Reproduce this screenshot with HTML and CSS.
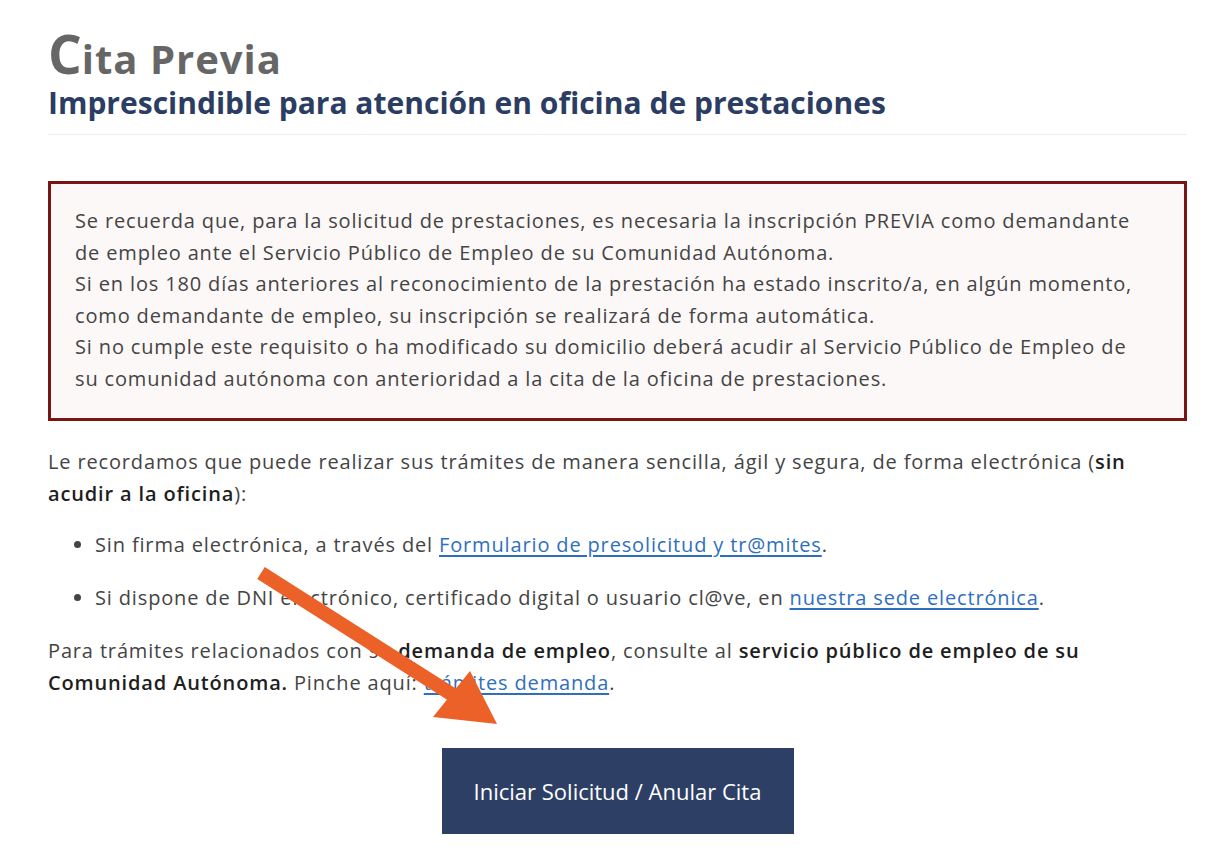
FILE: index.html
```html
<!DOCTYPE html>
<html lang="es">
<head>
<meta charset="utf-8">
<title>Cita Previa</title>
<link rel="stylesheet" href="styles.css">
</head>
<body>
<main class="page">
  <header class="head">
    <h1 class="title"><span class="cap">C</span>ita Previa</h1>
    <h2 class="subtitle">Imprescindible para atención en oficina de prestaciones</h2>
  </header>

  <div class="notice">
    <p>Se recuerda que, para la solicitud de prestaciones, es necesaria la inscripción PREVIA como demandante<br>de empleo ante el Servicio Público de Empleo de su Comunidad Autónoma.<br>Si en los 180 días anteriores al reconocimiento de la prestación ha estado inscrito/a, en algún momento,<br>como demandante de empleo, su inscripción se realizará de forma automática.<br>Si no cumple este requisito o ha modificado su domicilio deberá acudir al Servicio Público de Empleo de<br>su comunidad autónoma con anterioridad a la cita de la oficina de prestaciones.</p>
  </div>

  <p class="text">Le recordamos que puede realizar sus trámites de manera sencilla, ágil y segura, de forma electrónica (<strong>sin</strong><br><strong>acudir a la oficina</strong>):</p>

  <ul class="list">
    <li>Sin firma electrónica, a través del <a href="#">Formulario de presolicitud y tr@mites</a>.</li>
    <li>Si dispone de DNI electrónico, certificado digital o usuario cl@ve, en <a href="#">nuestra sede electrónica</a>.</li>
  </ul>

  <p class="text">Para trámites relacionados con su <strong>demanda de empleo</strong>, consulte al <strong>servicio público de empleo de su</strong><br><strong>Comunidad Autónoma.</strong> Pinche aquí: <a href="#">trámites demanda</a>.</p>

  <div class="actions">
    <a class="btn" href="#">Iniciar Solicitud / Anular Cita</a>
  </div>
</main>

<svg class="arrow" viewBox="0 0 1216 854" width="1216" height="854" aria-hidden="true">
  <line x1="261" y1="573" x2="456" y2="697" stroke="#ec6128" stroke-width="14"/>
  <polygon points="497,724 433,717 470,671" fill="#ec6128"/>
</svg>
</body>
</html>
```

FILE: styles.css
```css
html, body {
  margin: 0;
  padding: 0;
  background: #ffffff;
}

body {
  font-family: "Open Sans", "Liberation Sans", sans-serif;
  color: #444444;
  position: relative;
}

.page {
  width: 1139px;
  padding: 27px 0 40px 48px;
}

.head {
  border-bottom: 1px solid #eeeeee;
  padding-bottom: 14px;
}

.title {
  margin: 0;
  font-family: "Open Sans", sans-serif;
  font-weight: 700;
  font-size: 40px;
  line-height: 54px;
  color: #666666;
  letter-spacing: 1px;
}

.title .cap {
  font-size: 53px;
  letter-spacing: 0;
}

.subtitle {
  margin: 0;
  font-family: "Open Sans", sans-serif;
  font-weight: 700;
  font-size: 30px;
  line-height: 34px;
  color: #2b3d62;
}

.notice {
  margin-top: 46px;
  border: 3px solid #781616;
  background: #fcf8f8;
  padding: 21px 10px 24px 24px;
}

.notice p,
.text,
.list li {
  font-size: 20px;
  line-height: 31.5px;
  letter-spacing: 0.85px;
}

.notice p {
  margin: 0;
}

.text {
  margin: 25px 0 0;
}

.list + .text {
  margin-top: 21.5px;
}

.text strong {
  color: #1e1e1e;
  font-weight: 600;
}

.list {
  margin: 20px 0 0;
  padding-left: 47px;
}

.list li + li {
  margin-top: 21.5px;
}

a {
  color: #2f6fbf;
  text-decoration: underline;
  text-underline-offset: 3px;
}

.actions {
  display: flex;
  justify-content: center;
  margin-top: 50px;
}

.btn {
  display: flex;
  align-items: center;
  justify-content: center;
  width: 352px;
  height: 86px;
  background: #2e3f66;
  color: #ffffff;
  text-decoration: none;
  font-family: "Open Sans", sans-serif;
  font-size: 22px;
}

.arrow {
  position: absolute;
  left: 0;
  top: 0;
  pointer-events: none;
}
```
